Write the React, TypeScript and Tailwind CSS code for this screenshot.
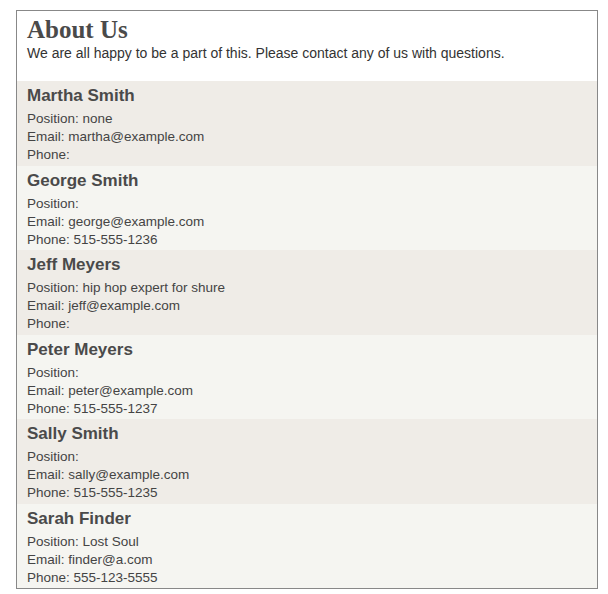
import React from "react";

interface Member {
  name: string;
  position: string;
  email: string;
  phone: string;
}

const members: Member[] = [
  { name: "Martha Smith", position: "none", email: "martha@example.com", phone: "" },
  { name: "George Smith", position: "", email: "george@example.com", phone: "515-555-1236" },
  { name: "Jeff Meyers", position: "hip hop expert for shure", email: "jeff@example.com", phone: "" },
  { name: "Peter Meyers", position: "", email: "peter@example.com", phone: "515-555-1237" },
  { name: "Sally Smith", position: "", email: "sally@example.com", phone: "515-555-1235" },
  { name: "Sarah Finder", position: "Lost Soul", email: "finder@a.com", phone: "555-123-5555" },
];

export default function App() {
  return (
    <div className="min-h-screen bg-white pl-4 pt-[10px] font-['Liberation_Sans',Arial,sans-serif] text-[#4a4a4a]">
      <div className="w-[582px] h-[579px] border border-[#888] flex flex-col overflow-hidden">
        <header className="h-[70px] shrink-0 px-[10px] pt-[5px]">
          <h1 className="font-['Liberation_Serif',Georgia,serif] text-[25px] font-bold leading-[28px] text-[#4a4a4a]">
            About Us
          </h1>
          <p className="text-[14px] leading-[18px] text-[#333]">
            We are all happy to be a part of this. Please contact any of us with questions.
          </p>
        </header>
        {members.map((m, i) => (
          <section
            key={m.name}
            className={`h-[84.5px] shrink-0 px-[10px] pt-[5px] ${i % 2 === 0 ? "bg-[#efece7]" : "bg-[#f5f5f1]"}`}
          >
            <h2 className="text-[17px] font-bold leading-[20px] text-[#4a4a4a]">{m.name}</h2>
            <div className="mt-[4px] text-[13.5px] leading-[18px] text-[#444]">
              <div>Position: {m.position}</div>
              <div>Email: {m.email}</div>
              <div>Phone: {m.phone}</div>
            </div>
          </section>
        ))}
      </div>
    </div>
  );
}
